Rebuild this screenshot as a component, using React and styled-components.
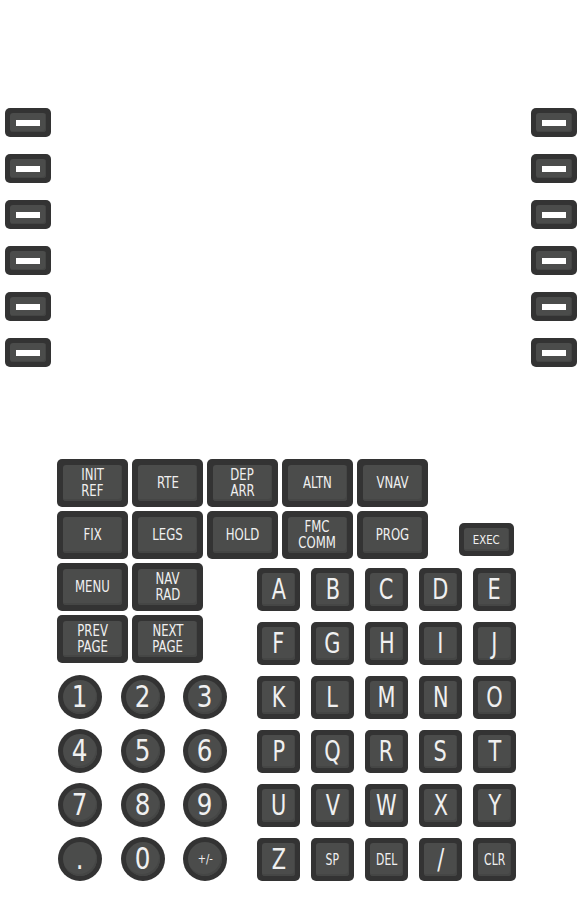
import React from "react";
import styled, { createGlobalStyle } from "styled-components";

const GlobalStyle = createGlobalStyle`
  body {
    margin: 0;
    background: #ffffff;
    font-family: "DejaVu Sans", "Liberation Sans", sans-serif;
  }
`;

const Page = styled.div`
  width: 584px;
  height: 900px;
  padding-top: 108px;
  box-sizing: border-box;
`;

const LskArea = styled.div`
  display: flex;
  justify-content: space-between;
  padding: 0 7px 0 5px;
`;

const LskColumn = styled.div`
  display: flex;
  flex-direction: column;
  gap: 17px;
`;

const Lsk = styled.div`
  width: 46px;
  height: 29px;
  box-sizing: border-box;
  padding: 5px;
  background: #333333;
  border-radius: 5px;
  display: flex;
`;

const LskFace = styled.div`
  flex: 1;
  background: #4b4c4b;
  border-radius: 3px;
  box-shadow: inset -1px -1px 0 #444544;
  display: flex;
  align-items: center;
  justify-content: center;
`;

const LskBar = styled.div`
  width: 24px;
  height: 6px;
  background: #ffffff;
`;

const Keyboard = styled.div`
  margin-top: 92px;
  padding-left: 57px;
  display: flex;
  flex-direction: column;
  gap: 4px;
`;

const TopBlock = styled.div`
  display: flex;
  align-items: flex-end;
`;

const FuncGrid = styled.div`
  display: grid;
  grid-template-columns: repeat(${(p) => p.$cols}, 71px);
  grid-auto-rows: 48px;
  column-gap: 4px;
  row-gap: 4px;
`;

const Key = styled.div`
  box-sizing: border-box;
  padding: ${(p) => p.$pad || 5}px;
  background: #333333;
  border-radius: 5px;
  display: flex;
  width: ${(p) => (p.$w ? `${p.$w}px` : "auto")};
  height: ${(p) => (p.$h ? `${p.$h}px` : "auto")};
`;

const KeyFace = styled.div`
  flex: 1;
  background: #4b4c4b;
  border-radius: 3px;
  box-shadow: inset -1px -2px 0 #454645;
  display: flex;
  flex-direction: column;
  align-items: center;
  justify-content: center;
  color: #f0f0f0;
  font-size: ${(p) => p.$size || 15}px;
  line-height: ${(p) => Math.round((p.$size || 15) * 1.07)}px;
  text-align: center;
`;

const Text = styled.span`
  display: block;
  transform: scaleX(${(p) => p.$sx || 0.78});
  white-space: nowrap;
`;

const Exec = styled(Key)`
  margin-left: 31px;
  margin-bottom: 3px;
`;

const BottomBlock = styled.div`
  display: flex;
  gap: 30px;
`;

const LeftColumn = styled.div`
  width: 170px;
  display: flex;
  flex-direction: column;
`;

const NumPad = styled.div`
  margin-top: 12px;
  padding-left: 1px;
  display: grid;
  grid-template-columns: repeat(3, 44px);
  grid-auto-rows: 44px;
  column-gap: 18.5px;
  row-gap: 10px;
`;

const Round = styled.div`
  box-sizing: border-box;
  padding: 5px;
  border-radius: 50%;
  background: #333333;
  display: flex;
`;

const RoundFace = styled.div`
  flex: 1;
  border-radius: 50%;
  background: #4b4c4b;
  box-shadow: inset -1px -2px 0 #454645;
  display: flex;
  align-items: center;
  justify-content: center;
  color: #f0f0f0;
  font-size: ${(p) => p.$size || 30}px;
  line-height: 1;
`;

const LetterGrid = styled.div`
  margin-top: 5px;
  display: grid;
  grid-template-columns: repeat(5, 43px);
  grid-auto-rows: 43px;
  gap: 11px;
`;

const Label = ({ text, sx }) =>
  text.split("\n").map((line) => (
    <Text key={line} $sx={sx}>
      {line}
    </Text>
  ));

const funcKeys = [
  "INIT\nREF", "RTE", "DEP\nARR", "ALTN", "VNAV",
  "FIX", "LEGS", "HOLD", "FMC\nCOMM", "PROG",
];

const leftKeys = ["MENU", "NAV\nRAD", "PREV\nPAGE", "NEXT\nPAGE"];

const numbers = [
  ["1"], ["2"], ["3"], ["4"], ["5"], ["6"], ["7"], ["8"], ["9"],
  ["."], ["0"], ["+/-", 12],
];

const letters = [
  ..."ABCDEFGHIJKLMNOPQRSTUVWXY".split("").map((c) => [c]),
  ["Z"], ["SP", 15], ["DEL", 15], ["/"], ["CLR", 15],
];

const LskStack = () => (
  <LskColumn>
    {[0, 1, 2, 3, 4, 5].map((i) => (
      <Lsk key={i}>
        <LskFace>
          <LskBar />
        </LskFace>
      </Lsk>
    ))}
  </LskColumn>
);

const App = () => {
  return (
    <Page>
      <GlobalStyle />
      <LskArea>
        <LskStack />
        <LskStack />
      </LskArea>
      <Keyboard>
        <TopBlock>
          <FuncGrid $cols={5}>
            {funcKeys.map((k) => (
              <Key key={k} $pad={6}>
                <KeyFace>
                  <Label text={k} />
                </KeyFace>
              </Key>
            ))}
          </FuncGrid>
          <Exec $w={55} $h={33} $pad={5}>
            <KeyFace $size={13}>
              <Label text="EXEC" />
            </KeyFace>
          </Exec>
        </TopBlock>
        <BottomBlock>
          <LeftColumn>
            <FuncGrid $cols={2}>
              {leftKeys.map((k) => (
                <Key key={k} $pad={6}>
                  <KeyFace>
                    <Label text={k} />
                  </KeyFace>
                </Key>
              ))}
            </FuncGrid>
            <NumPad>
              {numbers.map(([n, size]) => (
                <Round key={n}>
                  <RoundFace $size={size}>
                    <Text $sx={0.82}>{n}</Text>
                  </RoundFace>
                </Round>
              ))}
            </NumPad>
          </LeftColumn>
          <LetterGrid>
            {letters.map(([l, size]) => (
              <Key key={l} $pad={5}>
                <KeyFace $size={size || 29}>
                  <Label text={l} sx={0.72} />
                </KeyFace>
              </Key>
            ))}
          </LetterGrid>
        </BottomBlock>
      </Keyboard>
    </Page>
  );
};

export default App;
